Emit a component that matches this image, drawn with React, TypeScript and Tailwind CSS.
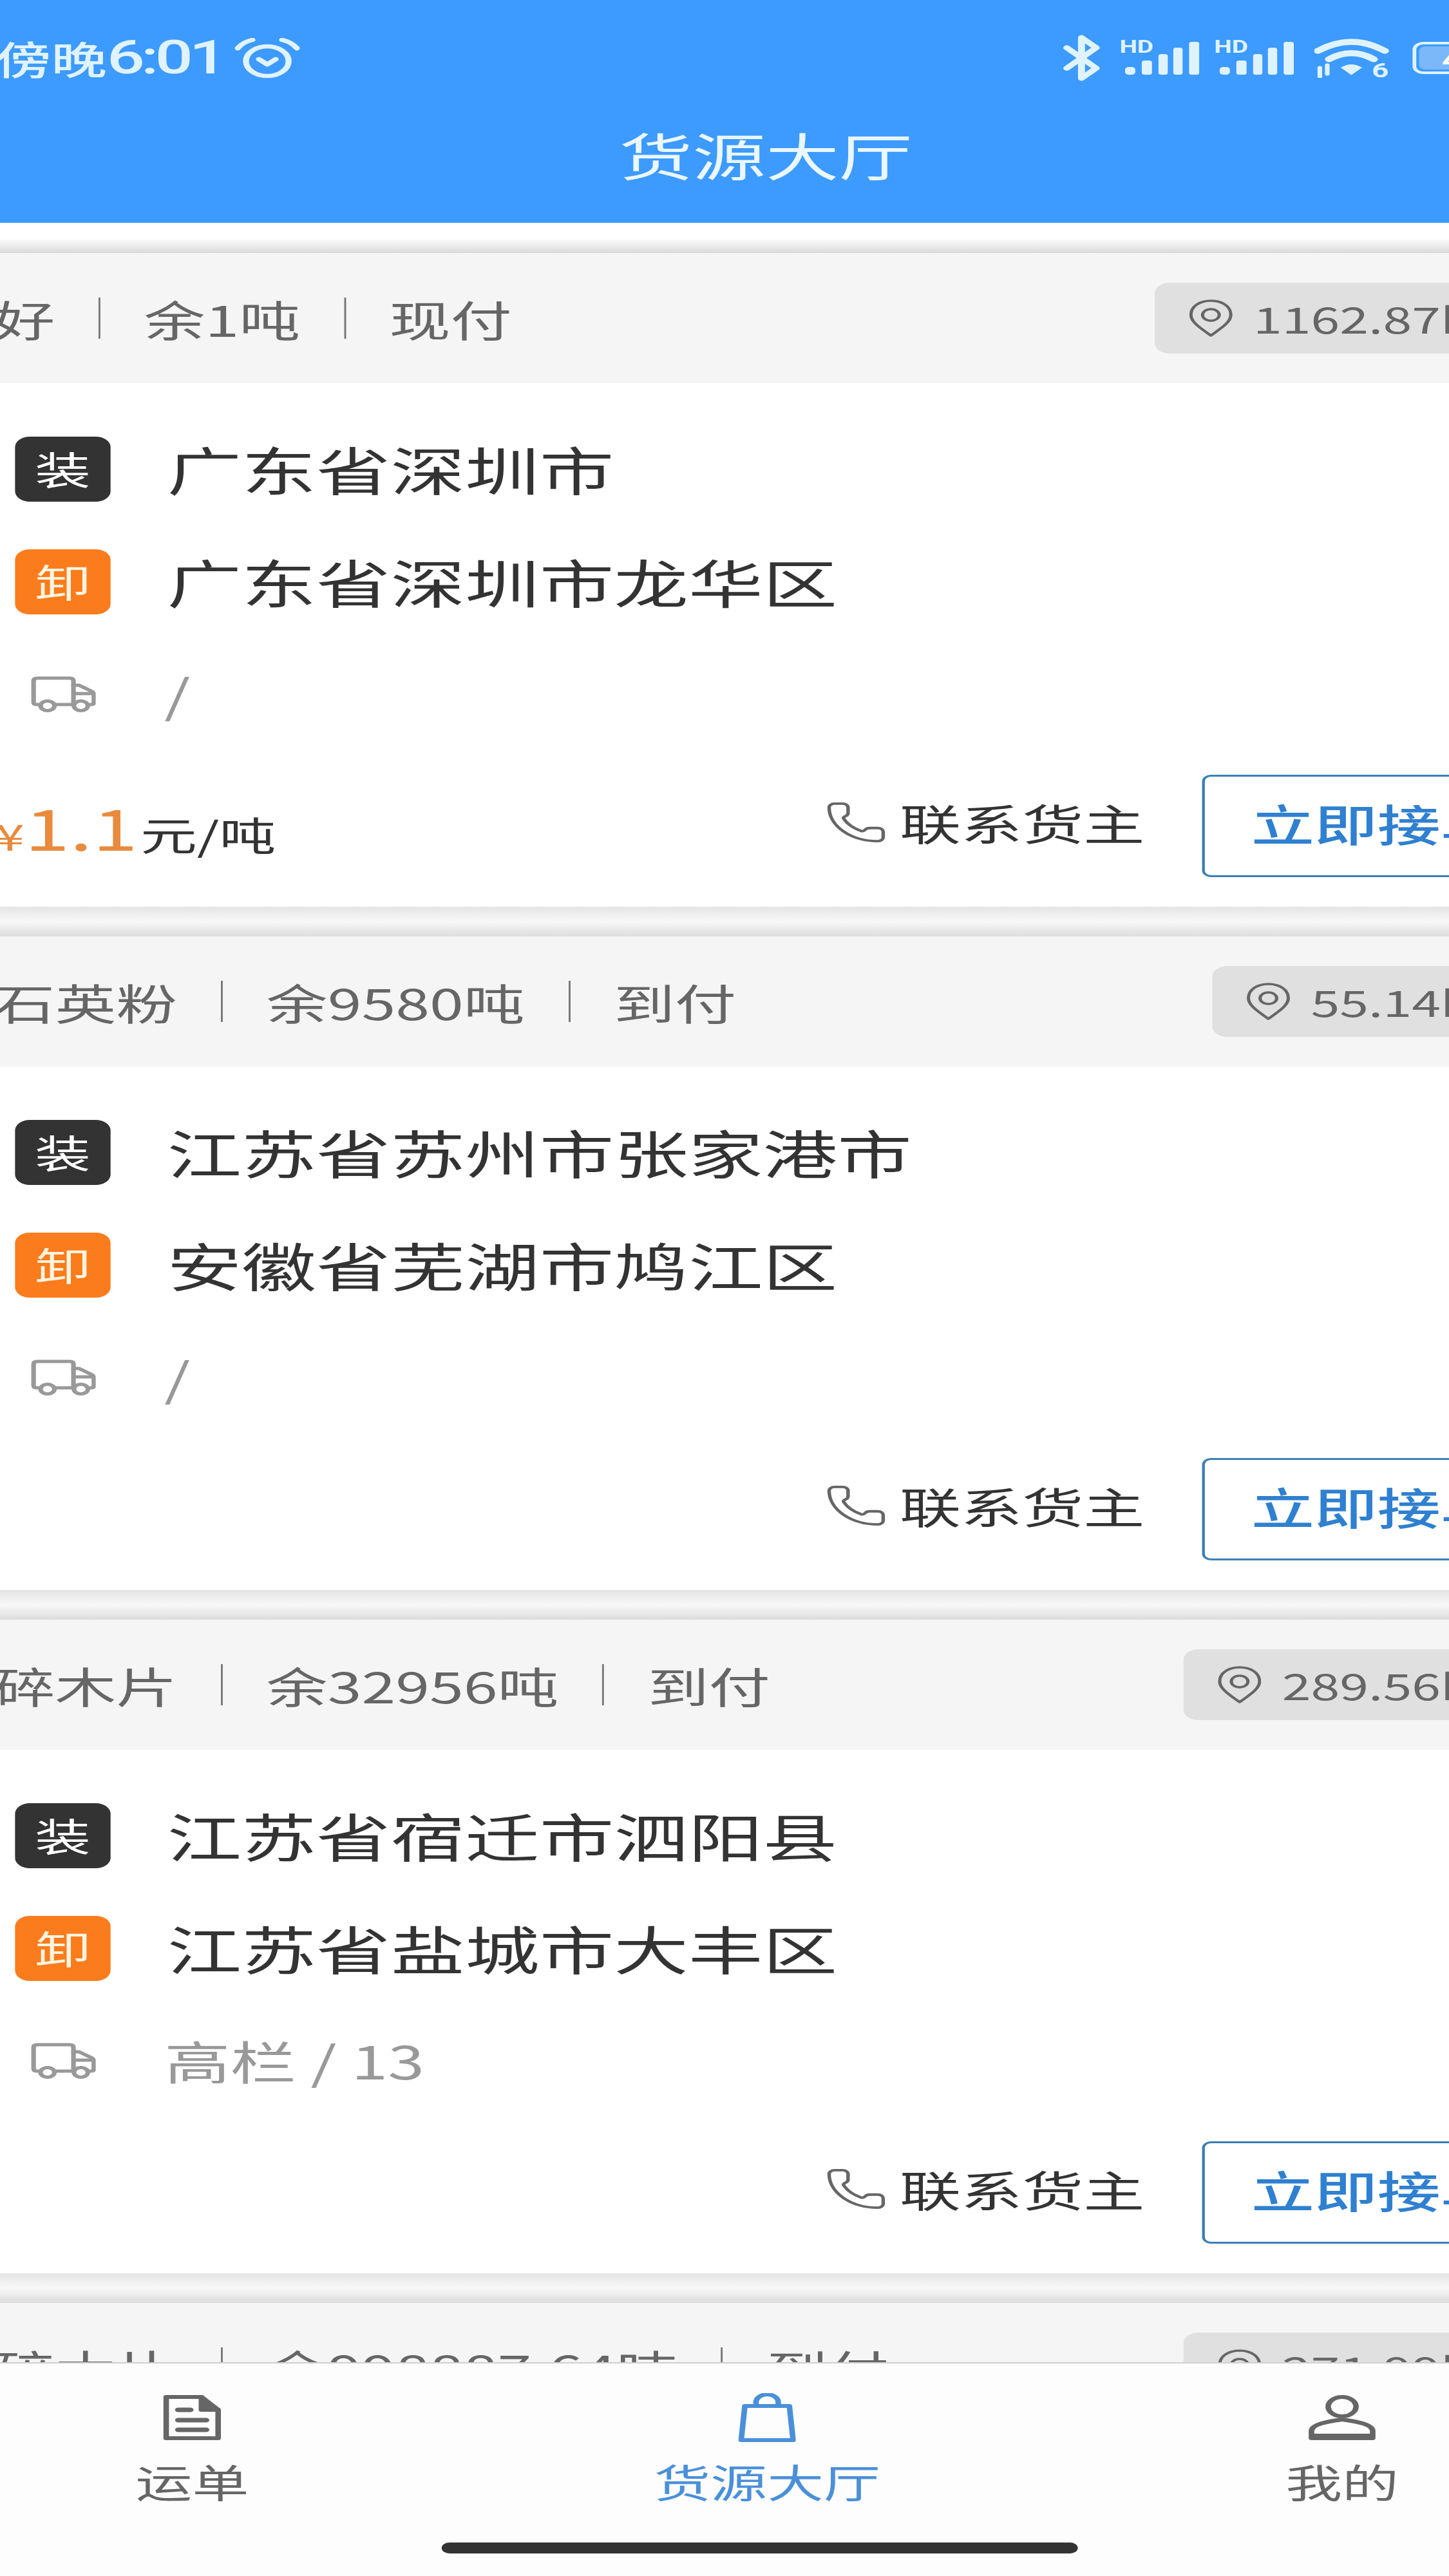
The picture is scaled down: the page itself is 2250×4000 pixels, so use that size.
import React from "react";
import { Phone, Bluetooth } from "lucide-react";

const light = "#dff3ff";

function Alarm() {
  return (
    <svg width="70" height="62" viewBox="0 0 70 62" fill="none" stroke={light} strokeWidth="6.5" strokeLinecap="round" strokeLinejoin="round">
      <circle cx="35" cy="36" r="23" />
      <path d="M26 33 L35 41 L44 33" />
      <path d="M3 16 Q9 6 19 3" />
      <path d="M67 16 Q61 6 51 3" />
    </svg>
  );
}

function Signal() {
  return (
    <svg width="86" height="56" viewBox="0 0 86 56" fill={light}>
      <text x="0" y="20" fontSize="27" fontWeight="700" fontFamily="Roboto, sans-serif">HD</text>
      <rect x="6" y="42" width="11" height="12" rx="4" />
      <rect x="24" y="32" width="11" height="22" rx="3" />
      <rect x="42" y="22" width="10" height="32" rx="3" />
      <rect x="58" y="12" width="10" height="42" rx="3" />
      <rect x="75" y="3" width="11" height="51" rx="3" />
    </svg>
  );
}

function Wifi() {
  return (
    <svg width="82" height="62" viewBox="0 0 82 62" fill="none" stroke={light} strokeLinecap="round">
      <path d="M4 20 Q40 -8 76 20" strokeWidth="9" />
      <path d="M16 33 Q40 14 64 33" strokeWidth="9" />
      <path d="M30 46 L40 56 L50 46 Q40 38 30 46 Z" fill={light} strokeWidth="2" />
      <path d="M6 46 V60 M14 42 V56" strokeWidth="5" />
      <text x="62" y="61" fontSize="32" fontWeight="700" fontFamily="Roboto, sans-serif" fill={light} stroke="none">6</text>
    </svg>
  );
}

function Pin() {
  return (
    <svg width="47" height="58" viewBox="0 0 47 58" fill="none" stroke="#666666" strokeWidth="3.5" strokeLinejoin="round" className="shrink-0">
      <path d="M23.5 56 C14 46 2 36 2 24 C2 11 11 2 23.5 2 C36 2 45 11 45 24 C45 36 33 46 23.5 56 Z" />
      <circle cx="23.5" cy="24" r="9" />
    </svg>
  );
}

function Truck() {
  return (
    <svg width="70" height="56" viewBox="0 0 70 56" fill="none" stroke="#999999" strokeWidth="5" strokeLinecap="round" strokeLinejoin="round" className="ml-[17px]">
      <path d="M10 44 H6 Q3 44 3 40 V7 Q3 3 7 3 H42 Q46 3 46 7 V44 M26 44 H45" />
      <path d="M46 14 H52 L65 23 Q68 25 68 29 V41 Q68 44 65 44 H62" />
      <path d="M48 27 H67" />
      <circle cx="18" cy="46" r="7.5" />
      <circle cx="54" cy="46" r="7.5" />
    </svg>
  );
}

function DocIcon() {
  return (
    <svg width="64" height="72" viewBox="0 0 64 72" fill="none" stroke="#666666" strokeWidth="6" strokeLinejoin="round" strokeLinecap="round">
      <path d="M4 4 H42 L60 24 V68 H4 Z" />
      <path d="M42 4 V24 H60" fill="#666666" />
      <path d="M17 24 H30 M17 40 H47 M17 55 H47" strokeWidth="7" />
    </svg>
  );
}

function BagIcon() {
  return (
    <svg width="62" height="76" viewBox="0 0 62 76" fill="none" stroke="#4a90d9" strokeWidth="6" strokeLinejoin="round">
      <path d="M7 20 H55 L59 73 H3 Z" />
      <path d="M19 20 V14 A12 12 0 0 1 43 14 V20" />
    </svg>
  );
}

function PersonIcon() {
  return (
    <svg width="74" height="72" viewBox="0 0 74 72" fill="none" stroke="#666666" strokeWidth="6" strokeLinejoin="round">
      <circle cx="37" cy="19" r="15" />
      <path d="M4 68 V57 C4 46 22 42 37 39 C52 42 70 46 70 57 V68 Z" />
      <path d="M4 66 H70" strokeWidth="10" />
    </svg>
  );
}

type CardData = {
  goods: string;
  left: string;
  pay: string;
  dist: string;
  from?: string;
  to?: string;
  truck?: string;
  price?: string;
};

const cards: CardData[] = [
  { goods: "好", left: "余1吨", pay: "现付", dist: "1162.87km", from: "广东省深圳市", to: "广东省深圳市龙华区", truck: "/", price: "1.1" },
  { goods: "石英粉", left: "余9580吨", pay: "到付", dist: "55.14km", from: "江苏省苏州市张家港市", to: "安徽省芜湖市鸠江区", truck: "/" },
  { goods: "碎木片", left: "余32956吨", pay: "到付", dist: "289.56km", from: "江苏省宿迁市泗阳县", to: "江苏省盐城市大丰区", truck: "高栏 / 13" },
  { goods: "碎木片", left: "余998887.64吨", pay: "到付", dist: "271.99km" },
];

function Sep() {
  return <div className="w-[2px] h-[64px] bg-[#777777]" />;
}

function Card({ c }: { c: CardData }) {
  return (
    <div className="bg-white">
      <div className="h-[202px] bg-[#f5f5f5] pl-[96px] pr-[84px] flex items-center justify-between">
        <div className="flex items-center gap-[47px] text-[66px] text-[#666666] whitespace-nowrap">
          <span>{c.goods}</span>
          <Sep />
          <span>{c.left}</span>
          <Sep />
          <span>{c.pay}</span>
        </div>
        <div className="h-[110px] rounded-[16px] bg-[#e0e0e0] pl-[37px] pr-[37px] flex items-center gap-[22px] text-[56px] text-[#666666] whitespace-nowrap">
          <Pin />
          <span>{c.dist}</span>
        </div>
      </div>
      {c.from && (
        <div className="h-[813px] pt-[83px] pl-[119px] pr-[90px] flex flex-col">
          <div className="flex items-center gap-[61px] h-[101px]">
            <div className="w-[103px] h-[101px] rounded-[16px] bg-[#333333] text-[#ffffff] text-[60px] pb-[4px] flex items-center justify-center">装</div>
            <span className="text-[80.3px] pb-[3px] text-[#333333] whitespace-nowrap">{c.from}</span>
          </div>
          <div className="flex items-center gap-[61px] h-[101px] mt-[74px]">
            <div className="w-[103px] h-[101px] rounded-[16px] bg-[#fb7c1c] text-[#fff4e0] text-[60px] pb-[4px] flex items-center justify-center">卸</div>
            <span className="text-[80.3px] pb-[3px] text-[#333333] whitespace-nowrap">{c.to}</span>
          </div>
          <div className="flex items-center h-[100px] mt-[74px]">
            <Truck />
            <span className="ml-[74px] pb-[3px] text-[71px] text-[#999999] whitespace-nowrap">{c.truck}</span>
          </div>
          <div className="flex items-center justify-between h-[159px] mt-[75px] -ml-[21px]">
            <div className="flex items-baseline whitespace-nowrap">
              {c.price && (
                <>
                  <span className="text-[56px] text-[#e98a3c]">¥</span>
                  <span className="text-[88px] text-[#e98a3c]">{c.price}</span>
                  <span className="ml-[3px] text-[61px] text-[#333333]">元/吨</span>
                </>
              )}
            </div>
            <div className="flex items-center">
              <div className="flex items-center pb-[12px]">
                <Phone size={70} strokeWidth={1.3} color="#666666" />
                <span className="ml-[12px] text-[66px] text-[#333333] whitespace-nowrap">联系货主</span>
              </div>
              <div className="ml-[62px] w-[371px] h-[159px] rounded-[10px] border-[3px] border-[#3c7fb5] pl-[50px] pb-[10px] flex items-center text-[68px] font-medium text-[#2f80d0] whitespace-nowrap">
                立即接单
              </div>
            </div>
          </div>
        </div>
      )}
    </div>
  );
}

function Tab({ icon, label, active }: { icon: React.ReactNode; label: string; active?: boolean }) {
  return (
    <div className={active ? "flex flex-col items-center text-[#4a90d9]" : "flex flex-col items-center text-[#666666]"}>
      <div className="h-[76px] flex items-center justify-center">{icon}</div>
      <span className="mt-[26px] text-[61px] leading-[70px]">{label}</span>
    </div>
  );
}

export default function App() {
  return (
    <div className="w-[2250px] h-[4000px] overflow-hidden bg-white">
      <div className="-ml-[148px] w-[1860px] h-[4000px] origin-top-left scale-x-[1.44] flex flex-col font-['Noto_Sans_CJK_SC','Noto_Sans',sans-serif]">
        <header className="h-[346px] shrink-0 bg-[#3d9afe] pt-[55px] flex flex-col">
          <div className="h-[70px] pl-[98px] pr-[124px] flex items-center justify-between">
            <div className="flex items-center whitespace-nowrap text-[#dff3ff]">
              <span className="text-[60px] font-medium">傍晚</span>
              <span className="text-[72px] tracking-[-4px] font-['Roboto',sans-serif] font-medium">6:01</span>
              <div className="ml-[12px]"><Alarm /></div>
            </div>
            <div className="flex items-center">
              <Bluetooth size={76} strokeWidth={2.4} color={light} className="-mx-[17px]" />
              <div className="ml-[20px]"><Signal /></div>
              <div className="ml-[16px]"><Signal /></div>
              <div className="ml-[22px]"><Wifi /></div>
              <div className="ml-[24px] w-[110px] h-[50px] rounded-[12px] border-[4px] border-[#dff3ff] p-[3px]">
                <div className="h-full rounded-[7px] bg-[#7ab8fa] pl-[25px] flex items-center text-[36px] leading-none font-bold text-white">4</div>
              </div>
            </div>
          </div>
          <div className="mt-[73px] pr-[3px] text-center text-[79px] leading-[84px] text-[#eaf7ff]">货源大厅</div>
        </header>

        <main className="flex-1 min-h-0 overflow-hidden">
          <div className="h-[47px] bg-linear-to-b from-white via-[#ffffff] to-[#d9d9d9]" />
          {cards.map((c, i) => (
            <React.Fragment key={i}>
              {i > 0 && <div className="h-[46px] bg-linear-to-b from-[#e4e4e4] via-[#f8f8f8] to-[#dcdcdc]" />}
              <Card c={c} />
            </React.Fragment>
          ))}
        </main>

        <footer className="h-[332px] shrink-0 bg-[#fdfdfd] border-t-2 border-[#d0d0d0] flex flex-col">
          <div className="grid grid-cols-3 pt-[46px]">
            <Tab icon={<DocIcon />} label="运单" />
            <Tab icon={<BagIcon />} label="货源大厅" active />
            <Tab icon={<PersonIcon />} label="我的" />
          </div>
          <div className="ml-[579px] mt-[60px] w-[686px] h-[17px] rounded-full bg-[#333333]" />
        </footer>
      </div>
    </div>
  );
}
